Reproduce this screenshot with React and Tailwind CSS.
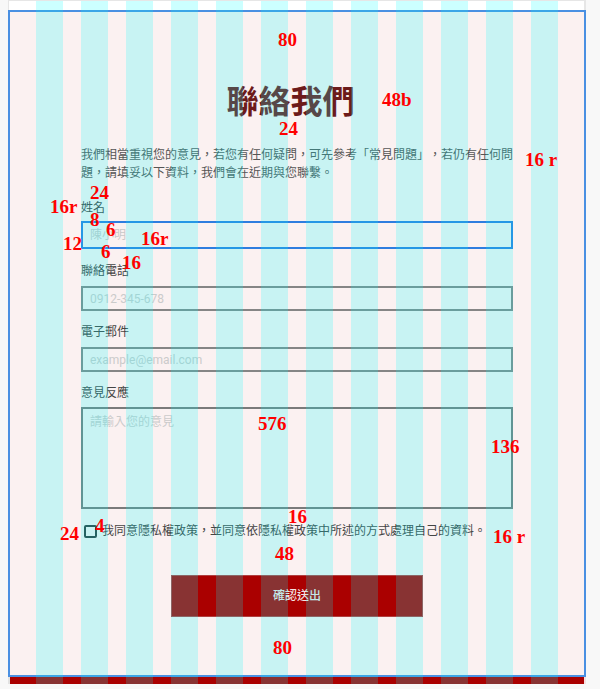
import React from "react";

const cols = Array.from({ length: 12 }, (_, i) => i);

const notes = [
  { t: "80", x: 279, y: 33 },
  { t: "48b", x: 383, y: 93 },
  { t: "24", x: 280, y: 122 },
  { t: "16 r", x: 526, y: 153 },
  { t: "24", x: 91, y: 186 },
  { t: "16r", x: 51, y: 200 },
  { t: "8", x: 91, y: 213 },
  { t: "6", x: 107, y: 223 },
  { t: "12", x: 64, y: 237 },
  { t: "16r", x: 142, y: 232 },
  { t: "6", x: 102, y: 245 },
  { t: "16", x: 123, y: 256 },
  { t: "576", x: 259, y: 417 },
  { t: "136", x: 492, y: 440 },
  { t: "16", x: 289, y: 510 },
  { t: "4", x: 96, y: 519 },
  { t: "24", x: 61, y: 527 },
  { t: "16 r", x: 494, y: 530 },
  { t: "48", x: 276, y: 547 },
  { t: "80", x: 274, y: 641 },
];

function Label({ children, className = "" }) {
  return (
    <div className={"text-[12px] leading-[18px] text-[#444] " + className}>
      {children}
    </div>
  );
}

export default function App() {
  return (
    <div className="relative w-[600px] h-[689px] overflow-hidden bg-[#f8f8f8] font-['Roboto','Noto_Sans_CJK_TC',sans-serif] [text-spacing-trim:space-all]">
      <div className="ml-[8px] w-[578px]">
        <div className="h-[10px] bg-white border-t border-l border-r-2 border-[#e6e6e6]" />
        <main className="border-2 border-[#4a90e2] bg-[#fbf1f1] px-[71px] pt-[67px] pb-[58px]">
          <h1 className="text-center pr-[13px] text-[32px] leading-[40px] font-bold text-[#6d1a1a] font-['Noto_Sans_CJK_TC',sans-serif]">
            聯絡我們
          </h1>
          <p className="mt-[27px] text-[12px] leading-[18px] text-[#555] whitespace-nowrap">
            我們相當重視您的意見，若您有任何疑問，可先參考「常見問題」，若仍有任何問
            <br />
            題，請填妥以下資料，我們會在近期與您聯繫。
          </p>

          <Label className="mt-[17px]">姓名</Label>
          <input
            className="mt-[4px] block w-full h-[28px] border-2 border-[#2f7ddf] bg-transparent px-[7px] text-[12px] outline-none placeholder:text-[#c8c8c8]"
            placeholder="陳小明"
          />

          <Label className="mt-[13px]">聯絡電話</Label>
          <input
            className="mt-[6px] block w-full h-[25px] border-2 border-[#858585] bg-transparent px-[7px] text-[12px] outline-none placeholder:text-[#cbcbcb]"
            placeholder="0912-345-678"
          />

          <Label className="mt-[12px]">電子郵件</Label>
          <input
            className="mt-[6px] block w-full h-[25px] border-2 border-[#858585] bg-transparent px-[7px] text-[12px] outline-none placeholder:text-[#cbcbcb]"
            placeholder="example@email.com"
          />

          <Label className="mt-[12px]">意見反應</Label>
          <textarea
            className="mt-[5px] block w-full h-[102px] resize-none border-2 border-[#7a7a7a] bg-transparent px-[7px] pt-[4px] text-[12px] leading-[18px] outline-none placeholder:text-[#cbcbcb]"
            placeholder="請輸入您的意見"
          />

          <div className="mt-[13px] flex items-center h-[18px]">
            <span className="ml-[3px] w-[13px] h-[13px] border-2 border-[#2e3b3b] rounded-[2px]" />
            <span className="ml-[5px] text-[12px] leading-[18px] text-[#444] whitespace-nowrap">
              我同意隱私權政策，並同意依隱私權政策中所述的方式處理自己的資料。
            </span>
          </div>

          <button className="mt-[35px] mx-auto block w-[252px] h-[42px] bg-[#aa0000] border border-[#b04040] text-[12px] font-medium text-[#f3e2e2]">
            確認送出
          </button>
        </main>
        <div className="flex h-[7px]">
          <div className="w-[2px] bg-[#e2e2e2]" />
          <div className="flex-1 bg-[#aa0000]" />
          <div className="w-[2px] bg-[#f6e0e0]" />
        </div>
      </div>

      <div className="pointer-events-none absolute left-[36px] top-[1px] h-[683px] flex gap-[18px]">
        {cols.map((i) => (
          <div key={i} className="w-[27px] h-full bg-[rgba(0,255,255,0.2)]" />
        ))}
      </div>

      {notes.map((n, i) => (
        <span
          key={i}
          className="pointer-events-none absolute whitespace-pre font-['Liberation_Serif',serif] font-bold text-[19px] leading-none text-[#ff0000]"
          style={{ left: n.x - 1, top: n.y - 3 }}
        >
          {n.t}
        </span>
      ))}
    </div>
  );
}
